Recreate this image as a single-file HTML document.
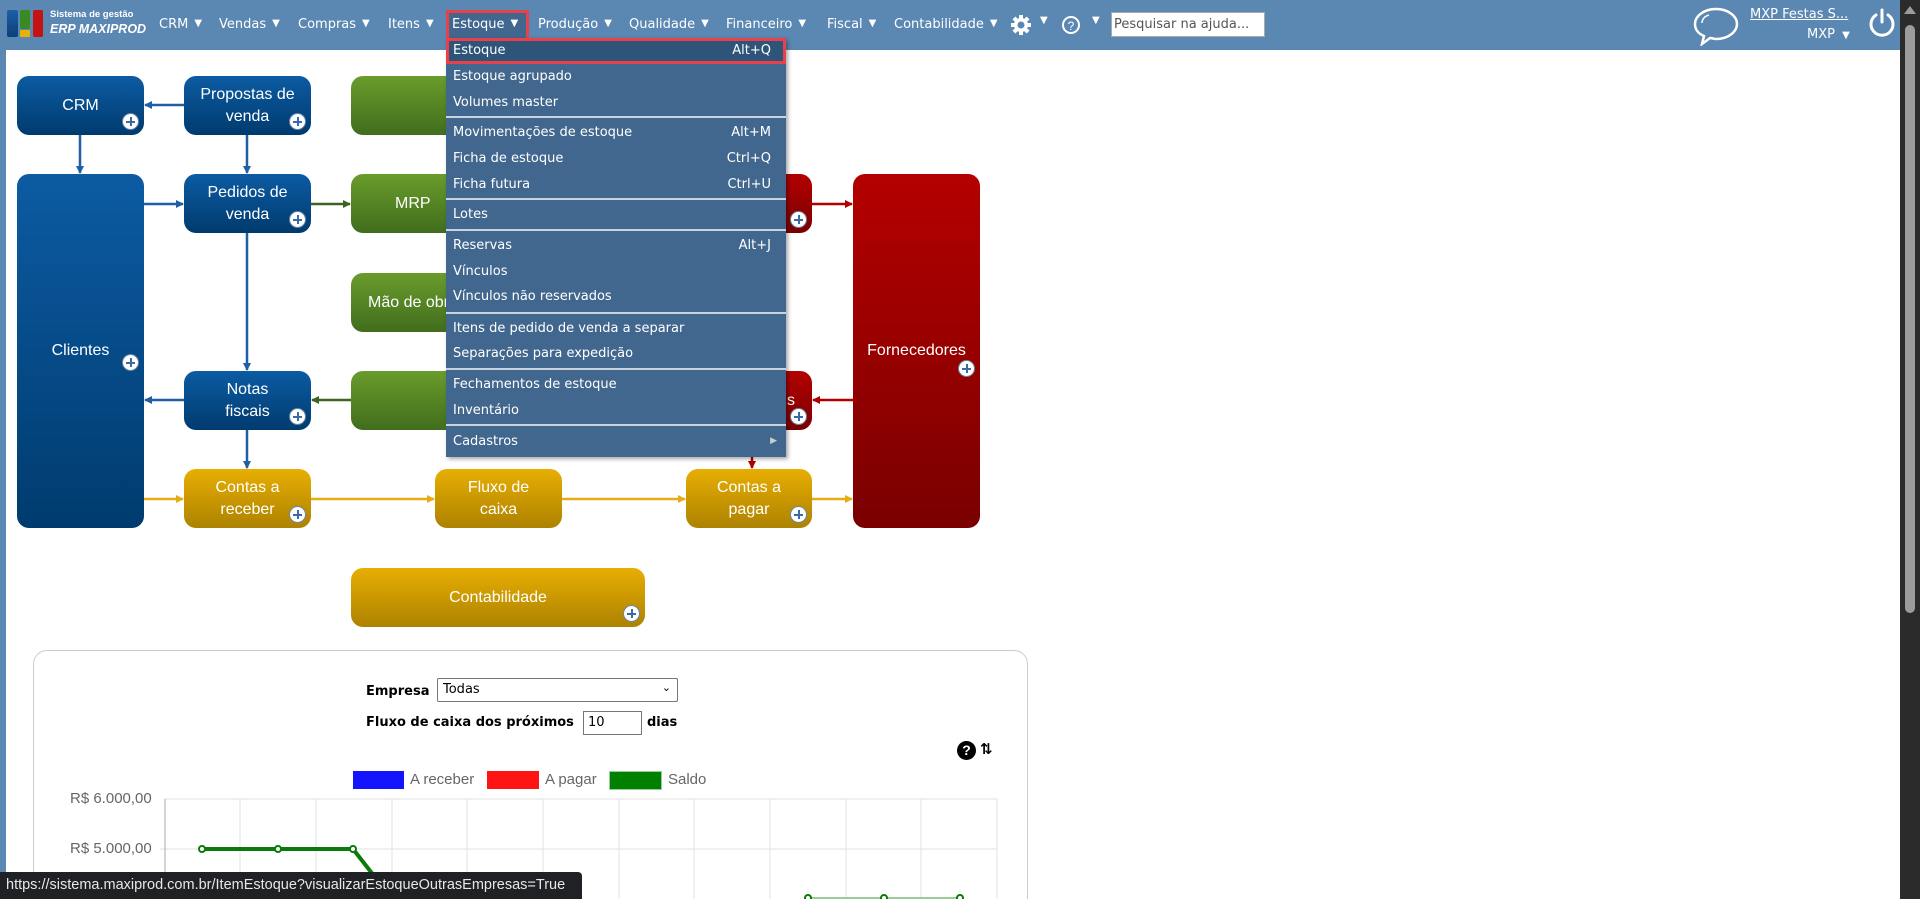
<!DOCTYPE html>
<html style="overflow:hidden;height:899px"><head><meta charset="utf-8"><style>
*{margin:0;padding:0;box-sizing:border-box}
body{width:1920px;height:899px;overflow:hidden;background:#fff;font-family:"DejaVu Sans","Liberation Sans",sans-serif;position:relative}
#wrap{position:absolute;left:0;top:0;width:1920px;height:899px;overflow:hidden}
#nav{position:absolute;left:0;top:0;width:1900px;height:50px;background:#5b87b3}
.ni{position:absolute;top:17px;color:#fff;font-size:13px;white-space:nowrap}
.ni .c{font-size:10px;margin-left:6px;position:relative;top:-2px}
#left{position:absolute;left:0;top:50px;width:6px;height:849px;background:#5b87b3}
#scroll{position:absolute;left:1900px;top:0;width:20px;height:899px;background:#2b2b2b}
#thumb{position:absolute;left:1905px;top:25px;width:10px;height:588px;background:#9c9c9c;border-radius:5px}
.box{position:absolute;border-radius:12px;color:#fff;font-family:"Liberation Sans",sans-serif;font-size:16px;text-align:center;display:flex;align-items:center;justify-content:center;line-height:22px}
.b{background:linear-gradient(#0c5ba3,#003b6e)}
.g{background:linear-gradient(#6a9c2c,#416d1d)}
.r{background:linear-gradient(#b40000,#7a0000)}
.y{background:linear-gradient(#e8ae02,#ad8200)}
.pl{position:absolute;width:17px;height:17px;border-radius:50%;background:#fff;right:5px;bottom:5px;border:1px solid #6a87a8}
.pl:before{content:"";position:absolute;left:3px;top:7px;width:9px;height:2px;background:#3b6aa5}
.pl:after{content:"";position:absolute;left:7px;top:3px;width:2px;height:9px;background:#3b6aa5}
#menu{position:absolute;left:446px;top:38px;width:340px;height:419px;background:#41678e;box-shadow:2px 2px 4px rgba(0,0,0,.35);font-size:13px;color:#fff}
.mi{position:absolute;left:7px;right:15px;white-space:nowrap}
.mi span{position:absolute;right:0}
.sep{position:absolute;left:0;right:0;height:2px;background:#c8d3df}
</style></head><body><div id="wrap">
<div id="nav">
 <div style="position:absolute;left:7px;top:10px;width:11px;height:27px;background:linear-gradient(#1b5fa8,#0d3f78);border-radius:2px"></div>
 <div style="position:absolute;left:20px;top:10px;width:10px;height:19px;background:#3a8a22;border-radius:2px"></div>
 <div style="position:absolute;left:20px;top:30px;width:10px;height:7px;background:#e8b10a;border-radius:1px"></div>
 <div style="position:absolute;left:33px;top:10px;width:10px;height:27px;background:#c31313;border-radius:2px"></div>
 <div style="position:absolute;left:50px;top:9px;color:#fff;font-size:9.5px;font-weight:bold;font-family:'Liberation Sans',sans-serif">Sistema de gestão</div>
 <div style="position:absolute;left:50px;top:22px;color:#fff;font-size:12.5px;font-weight:bold;font-style:italic;font-family:'Liberation Sans',sans-serif">ERP MAXIPROD</div>
 <div class="ni" style="left:159px">CRM<span class="c">▼</span></div>
 <div class="ni" style="left:219px">Vendas<span class="c">▼</span></div>
 <div class="ni" style="left:298px">Compras<span class="c">▼</span></div>
 <div class="ni" style="left:388px">Itens<span class="c">▼</span></div>
 <div style="position:absolute;left:446px;top:10px;width:83px;height:28px;background:#41678e;border:3px solid #e8414a;border-bottom:none"></div>
 <div class="ni" style="left:452px">Estoque<span class="c">▼</span></div>
 <div class="ni" style="left:538px">Produção<span class="c">▼</span></div>
 <div class="ni" style="left:629px">Qualidade<span class="c">▼</span></div>
 <div class="ni" style="left:726px">Financeiro<span class="c">▼</span></div>
 <div class="ni" style="left:827px">Fiscal<span class="c">▼</span></div>
 <div class="ni" style="left:894px">Contabilidade<span class="c">▼</span></div>
 <svg style="position:absolute;left:1010px;top:14px" width="22" height="22" viewBox="0 0 22 22"><g fill="#fff"><circle cx="11" cy="11" r="7"/><rect x="9" y="1" width="4" height="20"/><rect x="1" y="9" width="20" height="4"/><rect x="9" y="1" width="4" height="20" transform="rotate(45 11 11)"/><rect x="9" y="1" width="4" height="20" transform="rotate(-45 11 11)"/></g><circle cx="11" cy="11" r="3.5" fill="#5b87b3"/></svg>
 <div class="ni" style="left:1040px;top:15px;font-size:10px">▼</div>
 <svg style="position:absolute;left:1061px;top:15px" width="20" height="20"><circle cx="10" cy="10" r="8" fill="none" stroke="#fff" stroke-width="2"/><text x="10" y="15" fill="#fff" font-size="12" text-anchor="middle" font-family="Liberation Sans">?</text></svg>
 <div class="ni" style="left:1092px;top:15px;font-size:10px">▼</div>
 <div style="position:absolute;left:1111px;top:12px;width:154px;height:25px;background:#fff;border:1px solid #aaa;font-size:13px;color:#555;padding:4px 2px">Pesquisar na ajuda...</div>
 <svg style="position:absolute;left:1692px;top:6px" width="48" height="40" viewBox="0 0 48 40"><path d="M24 3C12 3 3 10 3 18c0 6 4 10 9 12l-2 8 8-6c2 0 4 1 6 1 12 0 21-7 21-15S36 3 24 3z" fill="none" stroke="#fff" stroke-width="2.5"/><path d="M10 17c0-4 3-7 7-8" fill="none" stroke="#fff" stroke-width="1.5"/></svg>
 <div style="position:absolute;left:1750px;top:7px;color:#fff;font-size:13px;text-decoration:underline">MXP Festas S...</div>
 <div style="position:absolute;left:1807px;top:27px;color:#fff;font-size:13px">MXP <span style="font-size:10px;margin-left:3px">▼</span></div>
 <svg style="position:absolute;left:1868px;top:8px" width="28" height="30" viewBox="0 0 28 30"><path d="M8 7A11 11 0 1 0 20 7" fill="none" stroke="#fff" stroke-width="3" stroke-linecap="round"/><line x1="14" y1="2" x2="14" y2="14" stroke="#fff" stroke-width="3" stroke-linecap="round"/></svg>
</div>
<div id="left"></div>
<div id="scroll"></div><div id="thumb"></div>
<div style="position:absolute;left:1904px;top:6px;width:0;height:0;border-left:6px solid transparent;border-right:6px solid transparent;border-bottom:8px solid #9c9c9c"></div>

<svg style="position:absolute;left:0;top:0" width="1000" height="650">
<defs>
<marker id="ab" markerWidth="8" markerHeight="8" refX="7" refY="4" orient="auto" markerUnits="userSpaceOnUse"><path d="M0 0L8 4L0 8z" fill="#1e5fa5"/></marker>
<marker id="ag" markerWidth="8" markerHeight="8" refX="7" refY="4" orient="auto" markerUnits="userSpaceOnUse"><path d="M0 0L8 4L0 8z" fill="#3e6420"/></marker>
<marker id="ar" markerWidth="8" markerHeight="8" refX="7" refY="4" orient="auto" markerUnits="userSpaceOnUse"><path d="M0 0L8 4L0 8z" fill="#b00000"/></marker>
<marker id="ay" markerWidth="8" markerHeight="8" refX="7" refY="4" orient="auto" markerUnits="userSpaceOnUse"><path d="M0 0L8 4L0 8z" fill="#e5ad14"/></marker>
</defs>
<g stroke-width="2.5" fill="none">
<line x1="184" y1="105" x2="145" y2="105" stroke="#1e5fa5" marker-end="url(#ab)"/>
<line x1="80" y1="135" x2="80" y2="173" stroke="#1e5fa5" marker-end="url(#ab)"/>
<line x1="247" y1="135" x2="247" y2="173" stroke="#1e5fa5" marker-end="url(#ab)"/>
<line x1="144" y1="204" x2="183" y2="204" stroke="#1e5fa5" marker-end="url(#ab)"/>
<line x1="311" y1="204" x2="350" y2="204" stroke="#3e6420" marker-end="url(#ag)"/>
<line x1="247" y1="233" x2="247" y2="370" stroke="#1e5fa5" marker-end="url(#ab)"/>
<line x1="184" y1="400" x2="145" y2="400" stroke="#1e5fa5" marker-end="url(#ab)"/>
<line x1="351" y1="400" x2="312" y2="400" stroke="#3e6420" marker-end="url(#ag)"/>
<line x1="247" y1="430" x2="247" y2="468" stroke="#1e5fa5" marker-end="url(#ab)"/>
<line x1="144" y1="499" x2="183" y2="499" stroke="#e5ad14" marker-end="url(#ay)"/>
<line x1="311" y1="499" x2="434" y2="499" stroke="#e5ad14" marker-end="url(#ay)"/>
<line x1="562" y1="499" x2="685" y2="499" stroke="#e5ad14" marker-end="url(#ay)"/>
<line x1="812" y1="499" x2="852" y2="499" stroke="#e5ad14" marker-end="url(#ay)"/>
<line x1="812" y1="204" x2="852" y2="204" stroke="#b00000" marker-end="url(#ar)"/>
<line x1="853" y1="400" x2="813" y2="400" stroke="#b00000" marker-end="url(#ar)"/>
<line x1="752" y1="440" x2="752" y2="468" stroke="#b00000" marker-end="url(#ar)"/>
</g></svg>

<div class="box b" style="left:17px;top:76px;width:127px;height:59px">CRM<i class="pl"></i></div>
<div class="box b" style="left:184px;top:76px;width:127px;height:59px">Propostas de<br>venda<i class="pl"></i></div>
<div class="box g" style="left:351px;top:76px;width:127px;height:59px"></div>
<div class="box b" style="left:17px;top:174px;width:127px;height:354px">Clientes<i class="pl" style="bottom:auto;top:180px"></i></div>
<div class="box b" style="left:184px;top:174px;width:127px;height:59px">Pedidos de<br>venda<i class="pl"></i></div>
<div class="box g" style="left:351px;top:174px;width:127px;height:59px;justify-content:flex-start;padding-left:44px">MRP</div>
<div class="box r" style="left:686px;top:174px;width:126px;height:59px"><i class="pl"></i></div>
<div class="box g" style="left:351px;top:273px;width:200px;height:59px;justify-content:flex-start;padding-left:17px">Mão de obra</div>
<div class="box b" style="left:184px;top:371px;width:127px;height:59px">Notas<br>fiscais<i class="pl"></i></div>
<div class="box g" style="left:351px;top:371px;width:127px;height:59px"></div>
<div class="box r" style="left:686px;top:371px;width:126px;height:59px;justify-content:flex-end;padding-right:17px">s<i class="pl"></i></div>
<div class="box r" style="left:853px;top:174px;width:127px;height:354px">Fornecedores<i class="pl" style="bottom:auto;top:186px"></i></div>
<div class="box y" style="left:184px;top:469px;width:127px;height:59px">Contas a<br>receber<i class="pl"></i></div>
<div class="box y" style="left:435px;top:469px;width:127px;height:59px">Fluxo de<br>caixa</div>
<div class="box y" style="left:686px;top:469px;width:126px;height:59px">Contas a<br>pagar<i class="pl"></i></div>
<div class="box y" style="left:351px;top:568px;width:294px;height:59px">Contabilidade<i class="pl"></i></div>

<div id="menu">
 <div style="position:absolute;left:0;top:0;width:340px;height:26px;background:#2e5579;border:3px solid #e8414a"></div>
 <div class="mi" style="top:5px">Estoque<span>Alt+Q</span></div>
 <div class="mi" style="top:31px">Estoque agrupado</div>
 <div class="mi" style="top:57px">Volumes master</div>
 <div class="sep" style="top:78px"></div>
 <div class="mi" style="top:87px">Movimentações de estoque<span>Alt+M</span></div>
 <div class="mi" style="top:113px">Ficha de estoque<span>Ctrl+Q</span></div>
 <div class="mi" style="top:139px">Ficha futura<span>Ctrl+U</span></div>
 <div class="sep" style="top:160px"></div>
 <div class="mi" style="top:169px">Lotes</div>
 <div class="sep" style="top:191px"></div>
 <div class="mi" style="top:200px">Reservas<span>Alt+J</span></div>
 <div class="mi" style="top:226px">Vínculos</div>
 <div class="mi" style="top:251px">Vínculos não reservados</div>
 <div class="sep" style="top:274px"></div>
 <div class="mi" style="top:283px">Itens de pedido de venda a separar</div>
 <div class="mi" style="top:308px">Separações para expedição</div>
 <div class="sep" style="top:330px"></div>
 <div class="mi" style="top:339px">Fechamentos de estoque</div>
 <div class="mi" style="top:365px">Inventário</div>
 <div class="sep" style="top:386px"></div>
 <div class="mi" style="top:396px">Cadastros<span style="font-size:9px;top:2px;right:-6px;color:#ccc">▶</span></div>
</div>

<div style="position:absolute;left:33px;top:650px;width:995px;height:270px;border:1px solid #ccc;border-radius:14px"></div>
<div style="position:absolute;left:366px;top:684px;font-size:13px;font-weight:bold">Empresa</div>
<div style="position:absolute;left:437px;top:678px;width:241px;height:24px;border:1px solid #767676;border-radius:2px;font-size:13px;padding:3px 5px">Todas<span style="position:absolute;right:6px;top:2px;font-size:11px">⌄</span></div>
<div style="position:absolute;left:366px;top:715px;font-size:13px;font-weight:bold">Fluxo de caixa dos próximos</div>
<div style="position:absolute;left:583px;top:711px;width:59px;height:24px;border:1px solid #767676;font-size:13px;padding:3px 4px">10</div>
<div style="position:absolute;left:647px;top:715px;font-size:13px;font-weight:bold">dias</div>
<div style="position:absolute;left:957px;top:741px;width:19px;height:19px;border-radius:50%;background:#000;color:#fff;font-size:14px;font-weight:bold;text-align:center;line-height:19px;font-family:'Liberation Sans'">?</div>
<div style="position:absolute;left:980px;top:740px;font-size:15px;font-weight:bold">⇅</div>
<div style="position:absolute;left:353px;top:771px;width:51px;height:18px;background:#1414ff"></div>
<div style="position:absolute;left:410px;top:771px;font-family:'Liberation Sans';font-size:15px;color:#666">A receber</div>
<div style="position:absolute;left:487px;top:771px;width:52px;height:18px;background:#ff1414"></div>
<div style="position:absolute;left:545px;top:771px;font-family:'Liberation Sans';font-size:15px;color:#666">A pagar</div>
<div style="position:absolute;left:609px;top:771px;width:53px;height:19px;background:#008000;border:1px solid #9c9"></div>
<div style="position:absolute;left:668px;top:771px;font-family:'Liberation Sans';font-size:15px;color:#666">Saldo</div>
<div style="position:absolute;left:70px;top:790px;font-family:'Liberation Sans';font-size:15px;color:#666">R$ 6.000,00</div>
<div style="position:absolute;left:70px;top:840px;font-family:'Liberation Sans';font-size:15px;color:#666">R$ 5.000,00</div>
<svg style="position:absolute;left:0;top:790px" width="1030" height="109">
<g stroke="#e2e2e2" stroke-width="1">
<line x1="165" y1="9" x2="997" y2="9"/><line x1="160" y1="59" x2="997" y2="59"/>
<line x1="240" y1="9" x2="240" y2="109"/><line x1="316" y1="9" x2="316" y2="109"/><line x1="392" y1="9" x2="392" y2="109"/><line x1="467" y1="9" x2="467" y2="109"/><line x1="543" y1="9" x2="543" y2="109"/><line x1="619" y1="9" x2="619" y2="109"/><line x1="694" y1="9" x2="694" y2="109"/><line x1="770" y1="9" x2="770" y2="109"/><line x1="846" y1="9" x2="846" y2="109"/><line x1="921" y1="9" x2="921" y2="109"/><line x1="997" y1="9" x2="997" y2="109"/>
</g>
<line x1="165" y1="9" x2="165" y2="109" stroke="#aaa"/>
<polyline points="202,59 278,59 353,59 385,100" fill="none" stroke="#0a7a0a" stroke-width="4"/>
<line x1="808" y1="108" x2="960" y2="108" stroke="#9c9" stroke-width="2"/>
<g fill="#fff" stroke="#0a7a0a" stroke-width="2"><circle cx="202" cy="59" r="3"/><circle cx="278" cy="59" r="3"/><circle cx="353" cy="59" r="3"/><circle cx="808" cy="108" r="3"/><circle cx="884" cy="108" r="3"/><circle cx="960" cy="108" r="3"/></g>
</svg>
<div style="position:absolute;left:0;top:872px;width:582px;height:27px;background:#202124;border-radius:0 4px 0 0;color:#e8e8e8;font-family:'Liberation Sans';font-size:14.5px;padding:5px 6px;white-space:nowrap">https://sistema.maxiprod.com.br/ItemEstoque?visualizarEstoqueOutrasEmpresas=True</div>
</div></body></html>
